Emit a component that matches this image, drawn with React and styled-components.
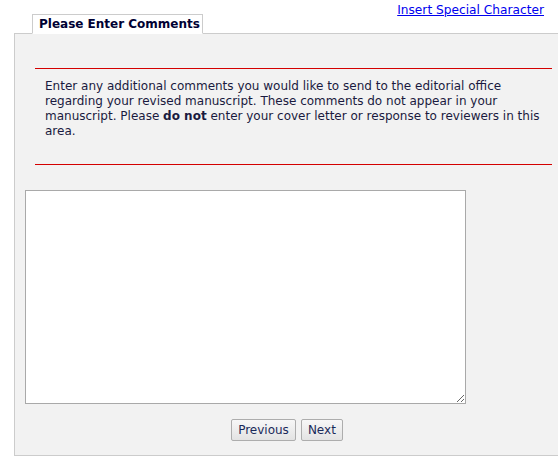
import styled, { createGlobalStyle } from "styled-components";

const GlobalStyle = createGlobalStyle`
  body {
    margin: 0;
    background: #fff;
    font-family: "DejaVu Sans", Verdana, sans-serif;
    font-size: 12px;
    color: #1a1a40;
  }
`;

function App() {
  return (
    <>
      <GlobalStyle />
      <Page>
        <Header>
          <Tab>Please Enter Comments</Tab>
          <SpecialLink href="#">Insert Special Character</SpecialLink>
        </Header>
        <Panel>
          <Notice>
            Enter any additional comments you would like to send to the
            editorial office regarding your revised manuscript. These comments
            do not appear in your manuscript. Please <b>do not</b> enter your
            cover letter or response to reviewers in this area.
          </Notice>
          <Comments />
          <Buttons>
            <Button>Previous</Button>
            <Button>Next</Button>
          </Buttons>
        </Panel>
      </Page>
    </>
  );
}

const Page = styled.div`
  width: 558px;
  height: 459px;
  overflow: hidden;
`;

const Header = styled.div`
  display: flex;
  align-items: flex-end;
  justify-content: space-between;
  height: 33px;
  padding-left: 32px;
  padding-right: 14px;
`;

const Tab = styled.div`
  box-sizing: border-box;
  width: 171px;
  height: 20px;
  padding: 0 0 0 6px;
  margin-bottom: -1px;
  border: 1px solid #ccc;
  border-bottom: 1px solid #fff;
  background: #fff;
  font-weight: bold;
  font-size: 12px;
  line-height: 19px;
  white-space: nowrap;
  color: #000033;
  position: relative;
  z-index: 1;
`;

const SpecialLink = styled.a`
  align-self: flex-start;
  margin-top: 3px;
  color: #0000ee;
  font-size: 12.2px;
  &:visited {
    color: #0000ee;
  }
`;

const Panel = styled.div`
  box-sizing: border-box;
  width: 546px;
  height: 423px;
  margin-left: 14px;
  border: 1px solid #ccc;
  background: #f2f2f2;
  padding: 34px 0 0 20px;
`;

const Notice = styled.div`
  box-sizing: border-box;
  width: 517px;
  height: 97px;
  border-top: 1px solid #d40000;
  border-bottom: 1px solid #d40000;
  padding: 10px 0 0 10px;
  line-height: 15px;
`;

const Comments = styled.textarea`
  display: block;
  box-sizing: border-box;
  width: 441px;
  height: 214px;
  margin: 25px 0 0 -10px;
  border: 1px solid #a9a9a9;
  background: #fff;
`;

const Buttons = styled.div`
  display: flex;
  justify-content: center;
  gap: 5px;
  margin: 15px 0 0 -20px;
`;

const Button = styled.button`
  box-sizing: border-box;
  height: 22px;
  padding: 0 6px;
  border: 1px solid #adadad;
  border-radius: 2px;
  background: linear-gradient(#f7f7f7, #e3e3e3);
  font-family: "DejaVu Sans", Verdana, sans-serif;
  font-size: 12px;
  color: #1a2a5a;
`;

export default App;
